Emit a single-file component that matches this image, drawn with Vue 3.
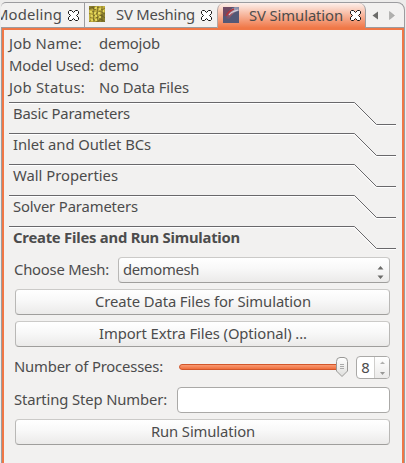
<script setup>
const fit = (el, { value }) => {
  el.style.letterSpacing = '0px'
  const natural = el.getBoundingClientRect().width
  el.style.letterSpacing = (value - natural) / el.textContent.length + 'px'
}
const vFit = { mounted: fit }

const info = [
  { label: 'Job Name:', lw: 73, value: 'demojob', vw: 61 },
  { label: 'Model Used:', lw: 85, value: 'demo', vw: 40 },
  { label: 'Job Status:', lw: 76, value: 'No Data Files', vw: 90 },
]
const sections = [
  { title: 'Basic Parameters', w: 117 },
  { title: 'Inlet and Outlet BCs', w: 138 },
  { title: 'Wall Properties', w: 105 },
  { title: 'Solver Parameters', w: 125 },
  { title: 'Create Files and Run Simulation', w: 227, open: true },
]
const closePath = 'M1.5 .5h2l2 2 2-2h2l1 1v2l-2 2 2 2v2l-1 1h-2l-2-2-2 2h-2l-1-1v-2l2-2-2-2v-2z'
</script>

<template>
  <div class="window">
    <header class="tabs">
      <div class="tab first">
        <span v-fit="67" class="tx">Modeling</span>
        <svg class="close" viewBox="0 0 11 11"><path :d="closePath" /></svg>
      </div>
      <div class="tab second">
        <svg class="icon" viewBox="0 0 16 16">
          <rect width="16" height="16" fill="#c2b040" />
          <path d="M0 0h7L4 3 0 4zM11 9l5-3v10H9z" fill="#8d8130" />
          <path d="M0 3l3-2 3 3 3-3 4 3 3-2M0 8l4-3 3 3 4-3 5 3M1 12l4-3 3 3 4-3 4 3M0 16l4-3 4 3 4-3 4 3M4 0l1 5-1 4 1 7M9 0l-1 8 1 8M13 0v16" fill="none" stroke="#5e5620" stroke-width=".6" />
          <path d="M1 6h2M6 2h2M10 3h2M5 7h2M9 7h2M2 10h2M6 10h2M10 11h2M2 14h2M6 14h2M14 5h1" stroke="#f3e765" stroke-width="1.6" />
        </svg>
        <span v-fit="79" class="tx">SV Meshing</span>
        <svg class="close" viewBox="0 0 11 11"><path :d="closePath" /></svg>
      </div>
      <div class="tab active">
        <svg class="icon" viewBox="0 0 16 16">
          <defs>
            <linearGradient id="vessel" x1="0" y1="1" x2="1" y2="0">
              <stop offset="0" stop-color="#5c5272" />
              <stop offset=".4" stop-color="#a05a66" />
              <stop offset=".7" stop-color="#a3a0b4" />
              <stop offset="1" stop-color="#7b86a6" />
            </linearGradient>
          </defs>
          <rect width="16" height="16" fill="#535876" />
          <path d="M0 0h9L3 7 0 10z" fill="#704a63" />
          <path d="M3 12C3 7 7 2 12 0h4v4C11 4 9 8 6 12z" fill="url(#vessel)" />
          <path d="M3 9C5 5 8 3 11 2" fill="none" stroke="#b3323a" stroke-width="1.600" />
          <path d="M6 8C8 5 11 4 15 3" fill="none" stroke="#d8d4dd" stroke-width="1.2" />
        </svg>
        <span v-fit="94" class="tx">SV Simulation</span>
        <svg class="close" viewBox="0 0 11 11"><path :d="closePath" /></svg>
      </div>
      <div class="scrollers">
        <svg viewBox="0 0 24 9"><path d="M6 .5v8L.5 4.5z" fill="#6c6c6a" /><path d="M17.500 .5v8l5-4z" fill="#b0b0ae" stroke="#989896" stroke-width=".5" /></svg>
      </div>
    </header>

    <main class="panel">
      <dl class="info">
        <template v-for="row in info" :key="row.label">
          <dt><span v-fit="row.lw" class="tx">{{ row.label }}</span></dt>
          <dd><span v-fit="row.vw" class="tx">{{ row.value }}</span></dd>
        </template>
      </dl>

      <section v-for="s in sections" :key="s.title" class="section">
        <svg class="rule" viewBox="0 0 388 25">
          <path class="light" d="M0 1.500H345L367 23.500H387" />
          <path class="dark" d="M0 .5H345.500L367.500 22.500H387" />
        </svg>
        <h2 :class="{ open: s.open }"><span v-fit="s.w" class="tx">{{ s.title }}</span></h2>
      </section>

      <div class="form">
        <div class="row mesh">
          <label><span v-fit="95" class="tx">Choose Mesh:</span></label>
          <div class="button combo">
            <span v-fit="76" class="tx">demomesh</span>
            <svg class="updown" viewBox="0 0 7 13"><path d="M.5 3.500 3.500 0l3 3.500zM.5 9.500h6l-3 3.500z" fill="#6b6b69" /></svg>
          </div>
        </div>
        <button class="button"><span v-fit="216" class="tx">Create Data Files for Simulation</span></button>
        <button class="button"><span v-fit="208" class="tx">Import Extra Files (Optional) ...</span></button>
        <div class="row processes">
          <label><span v-fit="149" class="tx">Number of Processes:</span></label>
          <div class="slider">
            <div class="groove"></div>
            <svg class="handle" viewBox="0 0 12 21">
              <defs>
                <linearGradient id="knob" x1="0" y1="0" x2="0" y2="1">
                  <stop offset="0" stop-color="#fff" />
                  <stop offset="1" stop-color="#dededc" />
                </linearGradient>
              </defs>
              <path d="M.5 4.500Q.5 .5 4 .5H8Q11.500 .5 11.500 4.500V14L6 19.500.5 14z" fill="url(#knob)" stroke="#999896" />
              <path d="M4 7.500h4M4 9.500h4M4 11.500h4" stroke="#aaa" />
            </svg>
          </div>
          <div class="spin">
            <span class="num">8</span>
            <div class="steps">
              <svg viewBox="0 0 5 14"><path d="M0 3 2.500 .5 5 3z" fill="#b0b0ae" /><path d="M0 11h5l-2.500 3z" fill="#989896" /></svg>
            </div>
          </div>
        </div>
        <div class="row start">
          <label><span v-fit="153" class="tx">Starting Step Number:</span></label>
          <input class="field" type="text" />
        </div>
        <button class="button"><span v-fit="104" class="tx">Run Simulation</span></button>
      </div>
    </main>
  </div>
</template>

<style>
body { margin: 0; background: #f2f1f0; }
</style>

<style scoped>
.window {
  box-sizing: border-box;
  width: 406px;
  height: 463px;
  padding: 2px 1px 0 1px;
  overflow: hidden;
  display: flex;
  flex-direction: column;
  background: #edeceb;
  color: #4c4c4c;
  font: 14.8px/22px "Noto Sans", "Open Sans", sans-serif;
}
.tx { display: block; width: max-content; flex: none; padding-bottom: 2px; line-height: 20px; white-space: nowrap; }
svg { display: block; flex: none; }
.tabs {
  box-sizing: border-box;
  height: 26px;
  flex: none;
  display: flex;
  background: #f2f1f0;
  border-top: 1px solid #9c9c9f;
  border-right: 1px solid #9c9c9f;
  border-top-right-radius: 8px;
  border-top-left-radius: 5px;
}
.tab {
  box-sizing: border-box;
  height: 25px;
  display: flex;
  align-items: center;
  border-right: 1px solid #9c9c9f;
  border-bottom: 1px solid #9c9c9f;
}
.first { width: 84px; padding-right: 5px; justify-content: flex-end; overflow: hidden; flex: none; }
.first .close { margin-left: 6px; }
.second { width: 132px; padding-left: 4px; }
.icon { width: 16px; height: 16px; margin-bottom: 2px; }
.second .icon { margin-bottom: 3px; }
.second .tx { margin-left: 11px; }
.second .close { margin-left: 6px; }
.close { width: 11px; height: 11px; margin-top: 0; }
.close path { fill: #fff; stroke: #111; stroke-width: 1; }
.active {
  width: 149px;
  padding-left: 5px;
  border-bottom: 0;
  border-left: 1px solid #b5a8a4;
  border-radius: 7px 7px 0 0;
  background: linear-gradient(#fdf0eb, #f6ad91 55%, #f07746);
}
.second { border-right: 0; }
.active .tx { margin-left: 10px; }
.active .close { margin-left: 7px; }
.scrollers {
  flex: 1;
  box-sizing: border-box;
  height: 25px;
  padding: 8px 0 0 6px;
  border-bottom: 1px solid #9c9c9f;
}
.scrollers svg { width: 24px; height: 9px; }
.panel {
  box-sizing: border-box;
  flex: 1;
  border: 2px solid #f07746;
  border-bottom: 0;
  outline: 1px solid #9c9c9f;
  width: 402px;
  margin-left: 1px;
  padding: 3px 6px 0 5px;
  background: #f2f1f0;
  clip-path: inset(0 -1px 0 -1px);
}
.info {
  margin: 0;
  display: grid;
  grid-template-columns: 90px 1fr;
  grid-auto-rows: 22px;
}
dd { margin: 0; }
.section { display: grid; height: 31px; }
.info + .section { margin-top: 3px; }
.rule { width: 388px; height: 25px; grid-area: 1 / 1; }
.rule path { fill: none; stroke-width: 1; }
.rule .light { stroke: #fff; }
.rule .dark { stroke: #69686b; }
h2 { grid-area: 1 / 1; margin: 0; padding: 1px 0 0 4px; font-size: inherit; font-weight: 400; }
h2.open { font-weight: 700; }
.form { display: flex; flex-direction: column; padding: 0 6px 0 6px; gap: 6px; }
.row { display: flex; align-items: center; }
label { margin-left: -1px; flex: none; }
.button {
  box-sizing: border-box;
  height: 26px;
  padding: 0 0 0 1px;
  display: flex;
  align-items: center;
  justify-content: center;
  border: 1px solid #b9b8b6;
  border-top-color: #cbcac8;
  border-bottom-color: #9f9e9c;
  border-radius: 4px;
  background: linear-gradient(#fff, #f8f8f8 45%, #ebeae9);
  color: inherit;
  font: inherit;
}
.combo { width: 272px; margin-left: auto; justify-content: space-between; padding: 0 5px 0 4px; }
.updown { width: 7px; height: 13px; margin-top: 4px; }
.processes { height: 28px; }
.slider { position: relative; width: 169px; height: 21px; margin-left: 16px; }
.groove {
  box-sizing: border-box;
  height: 6px;
  margin-top: 7px;
  border: 1px solid #d2562a;
  border-radius: 3px;
  background: linear-gradient(#f99b74, #ef6e3c);
}
.handle { position: absolute; right: 0; top: 0; width: 12px; height: 21px; }
.spin {
  box-sizing: border-box;
  width: 34px;
  height: 23px;
  margin-left: auto;
  display: flex;
  border: 1px solid #aaa9a7;
  border-radius: 4px;
  background: #fff;
  overflow: hidden;
}
.num { width: 17px; text-align: center; line-height: 20px; flex: none; }
.steps { flex: 1; padding: 4px 0 0 5px; border-left: 1px solid #cfcecc; background: linear-gradient(#fff, #ebeae9); }
.steps svg { width: 5px; height: 14px; }
.field {
  box-sizing: border-box;
  width: 213px;
  height: 26px;
  margin-left: auto;
  border: 1px solid #aaa9a7;
  border-radius: 4px;
  background: #fff;
}
</style>
